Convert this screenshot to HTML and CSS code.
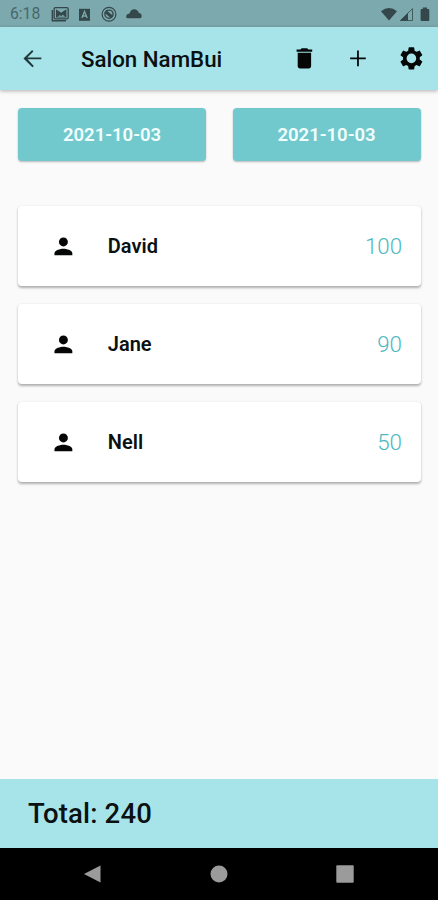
FILE: index.html
```html
<!DOCTYPE html>
<html lang="en">
<head>
<meta charset="utf-8">
<title>Salon NamBui</title>
<link rel="stylesheet" href="styles.css">
</head>
<body>
<div class="screen">
  <div class="status">
    <span class="time">6:18</span>
    <svg class="notices" width="96" height="18" viewBox="0 0 96 18">
      <path d="M2.400 5v10.800h13.600" fill="none" stroke="currentColor" stroke-width="1.600"/>
      <rect x="4.200" y="2.600" width="14" height="11.200" rx="1.200" fill="none" stroke="currentColor" stroke-width="1.300"/>
      <path d="M6 4.200l5.200 3.600 5.200-3.600v8.400H6z" fill="currentColor"/>
      <path d="M7.500 12l2.200-2 1.500 1 1.800-1.500 2.200 2.500z" class="cut"/>
      <rect x="29" y="3.800" width="11" height="12" fill="currentColor"/>
      <path d="M31.800 13l2.700-6.500L37.200 13M32.700 11h3.600" class="cutline"/>
      <circle cx="59" cy="9.200" r="6.900" fill="none" stroke="currentColor" stroke-width="1.200"/>
      <circle cx="59" cy="9.200" r="4.100" fill="none" stroke="currentColor" stroke-width="1.400"/>
      <path d="M55.500 6.500l6.500 5.500" stroke="currentColor" stroke-width="3"/>
      <path d="M77.500 13.300q-1.300 0-1.300-1.500 0-2.600 3.200-3.200 1.500-4.300 4.700-4.300 3.500 0 4.800 3.600 2.800.4 2.800 3.300 0 2.100-1.800 2.100z" fill="currentColor"/>
    </svg>
    <svg class="signals" width="50" height="18" viewBox="0 0 50 18">
      <path d="M1 6.200Q9 0 17 6.200L9 15.500z" fill="currentColor"/>
      <path d="M20.500 15.500L32.500 3.600v11.900z" fill="none" stroke="currentColor" stroke-width=".8"/>
      <path d="M20 15.800l8-8v8z" fill="currentColor"/>
      <path d="M42.800 2.600h4.200v1.500h1.300q1 0 1 1V15q0 1-1 1h-6.700q-1 0-1-1V5.100q0-1 1-1h1.200z" fill="currentColor"/>
    </svg>
  </div>
  <header class="appbar">
    <svg class="icon arrow" viewBox="0 0 24 24"><path d="M20 11.200H7.500l5.400-5.400L11.800 4.500 4 12l8 8 1.300-1.300-5.700-5.900H20z"/></svg>
    <h1>Salon NamBui</h1>
    <svg class="icon" viewBox="0 0 24 24"><path d="M6 19c0 1.100.9 2 2 2h8c1.100 0 2-.9 2-2V7H6v12zM19 4h-3.500l-1-1h-5l-1 1H5v2h14V4z"/></svg>
    <svg class="icon" viewBox="0 0 24 24"><path d="M19.500 12.750h-6.200V19h-1.600v-6.250H5.500v-1.500h6.200V5h1.600v6.250h6.200z"/></svg>
    <svg class="icon gear" viewBox="0 0 24 24"><path fill-rule="evenodd" d="M19.430 12.980c.04-.32.07-.64.07-.98s-.03-.66-.07-.98l2.110-1.650c.19-.15.24-.42.12-.64l-2-3.460c-.12-.22-.39-.3-.61-.22l-2.490 1c-.52-.4-1.080-.73-1.690-.98l-.38-2.650C14.460 2.180 14.250 2 14 2h-4c-.25 0-.46.18-.49.42l-.38 2.650c-.61.25-1.170.59-1.690.98l-2.490-1c-.23-.09-.49 0-.61.22l-2 3.460c-.13.22-.07.49.12.64l2.110 1.650c-.04.32-.07.65-.07.98s.03.66.07.98l-2.110 1.650c-.19.15-.24.42-.12.64l2 3.460c.12.22.39.3.61.22l2.490-1c.52.4 1.080.73 1.690.98l.38 2.650c.03.24.24.42.49.42h4c.25 0 .46-.18.49-.42l.38-2.650c.61-.25 1.170-.59 1.690-.98l2.490 1c.23.09.49 0 .61-.22l2-3.460c.12-.22.07-.49-.12-.64l-2.110-1.650zM12 16.300a4.300 4.300 0 1 1 0-8.600 4.300 4.300 0 0 1 0 8.600z"/></svg>
  </header>
  <main>
    <div class="dates">
      <button>2021-10-03</button>
      <button>2021-10-03</button>
    </div>
    <div class="list">
      <div class="card">
        <svg class="icon" viewBox="0 0 24 24"><circle cx="12" cy="8" r="4"/><path d="M12 14c-2.670 0-8 1.340-8 4v2h16v-2c0-2.660-5.330-4-8-4z"/></svg>
        <span class="name">David</span><span class="amount">100</span>
      </div>
      <div class="card">
        <svg class="icon" viewBox="0 0 24 24"><circle cx="12" cy="8" r="4"/><path d="M12 14c-2.670 0-8 1.340-8 4v2h16v-2c0-2.660-5.330-4-8-4z"/></svg>
        <span class="name">Jane</span><span class="amount">90</span>
      </div>
      <div class="card">
        <svg class="icon" viewBox="0 0 24 24"><circle cx="12" cy="8" r="4"/><path d="M12 14c-2.670 0-8 1.340-8 4v2h16v-2c0-2.660-5.330-4-8-4z"/></svg>
        <span class="name">Nell</span><span class="amount">50</span>
      </div>
    </div>
  </main>
  <footer class="total">Total: 240</footer>
  <nav class="navbar">
    <svg width="18" height="20" viewBox="0 0 18 20"><path d="M16.500 1.500v17L0 10z"/></svg>
    <svg width="18" height="20" viewBox="0 0 18 20"><circle cx="9" cy="10" r="8.500"/></svg>
    <svg width="18" height="20" viewBox="0 0 18 20"><rect x=".3" y="1.300" width="17.400" height="17.400" rx="1"/></svg>
  </nav>
</div>
</body>
</html>
```
FILE: styles.css
```css
* { box-sizing: border-box; }

body {
  margin: 0;
  font-family: Roboto, sans-serif;
  color: #0b1011;
}

.screen {
  display: flex;
  flex-direction: column;
  width: 438px;
  height: 900px;
  background: #fafafa;
  overflow: hidden;
}

.status {
  display: flex;
  align-items: center;
  height: 27px;
  padding: 1px 8px 0 10px;
  background: #7ca9ae;
  color: #34474a;
}

.time {
  width: 40px;
  font-size: 15.700px;
  line-height: 18px;
  color: #49666a;
}

.signals { margin-left: auto; }
.cut { fill: #6d969b; }
.cutline { fill: none; stroke: #7ca9ae; stroke-width: 1.3; }

.appbar {
  display: flex;
  align-items: center;
  flex: none;
  height: 62.500px;
  padding: 0 13.500px 0 18.500px;
  background: #a6e4ea;
  box-shadow: 0 1px 4px rgba(0, 0, 0, .3);
}

.appbar .icon { margin-right: 26.700px; }
.appbar .icon.gear { margin-right: 0; }

h1 {
  flex: 1;
  margin: 1px 0 0 9px;
  font-size: 22.300px;
  font-weight: 500;
  letter-spacing: 0;
  line-height: 28px;
}

.icon {
  flex: none;
  width: 26.800px;
  height: 26.800px;
  fill: #050707;
}

.arrow { fill: #23383b; }

main {
  flex: 1;
  padding: 18px 17.500px 0 18px;
}

.dates {
  display: grid;
  grid-template-columns: 1fr 1fr;
  gap: 26.500px;
}

button {
  height: 53.500px;
  padding: 1px 0 0;
  border: 0;
  border-radius: 4px;
  background: #72c9cd;
  color: #f2ffff;
  font: 600 18.500px/24px Roboto, sans-serif;
  letter-spacing: 0;
  box-shadow: 0 1px 2px rgba(0, 0, 0, .28);
}

.list {
  display: grid;
  gap: 18px;
  margin-top: 44.700px;
}

.card {
  display: flex;
  align-items: center;
  height: 80px;
  padding: 0 18.500px 0 31.500px;
  border-radius: 4px;
  background: #fff;
  box-shadow: 0 1.500px 2.500px rgba(0, 0, 0, .3);
}

.card .icon { margin-top: 1px; }

.name {
  flex: 1;
  margin-left: 31.500px;
  font-size: 20px;
  font-weight: 600;
}

.amount {
  font-size: 22.300px;
  font-weight: 300;
  color: #4db8bf;
}

.total {
  display: flex;
  align-items: center;
  flex: none;
  height: 68.500px;
  padding: 1px 0 0 28px;
  background: #a6e4ea;
  font-size: 27.500px;
  font-weight: 550;
  letter-spacing: .15px;
}

.navbar {
  display: flex;
  flex: none;
  justify-content: space-between;
  align-items: center;
  height: 52.500px;
  padding: 0 84px 0 84px;
  background: #000;
  fill: #9b9b9b;
}
```
